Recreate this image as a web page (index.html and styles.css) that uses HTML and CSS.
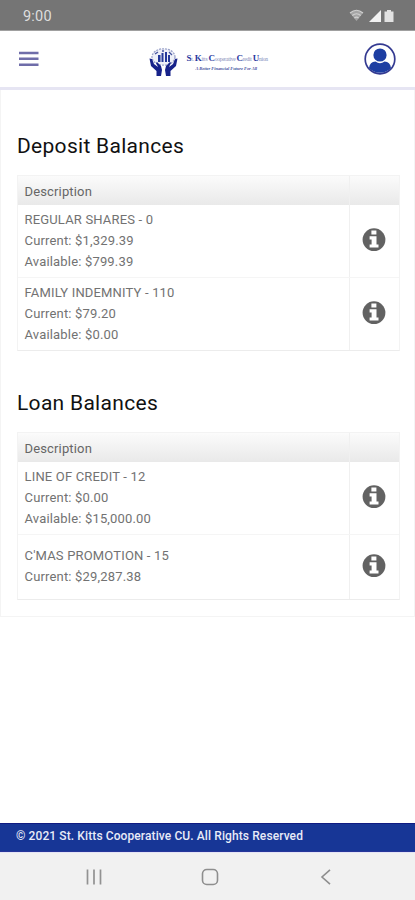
FILE: index.html
```html
<!DOCTYPE html>
<html lang="en">
<head>
<meta charset="utf-8">
<meta name="viewport" content="width=device-width, initial-scale=1">
<title>Account Balances</title>
<link rel="stylesheet" href="styles.css">
</head>
<body>
<svg class="defs" width="0" height="0" aria-hidden="true">
  <symbol id="info" viewBox="0 0 24 24">
    <circle cx="12" cy="11.7" r="11.4" fill="#626262"/>
    <path fill="#fff" d="M9.4 2.6h5v3.8h-5zM7.6 8.300h6.9v8.2h2v3.1H7.6v-3.1h2v-5.1h-2z"/>
  </symbol>
</svg>
<div class="status">
  <span class="time">9:00</span>
  <svg class="status-icons" width="46" height="16" viewBox="0 0 46 16">
    <path d="M1 5Q7.500-.5 14 5L7.500 13z" fill="#a5a5a5"/>
    <path d="M1 5Q7.500-.5 14 5M3.300 7.500Q7.500 4 11.700 7.500M5.400 10Q7.500 8.200 9.600 10" fill="none" stroke="#d0d0d0" stroke-width="1.200"/>
    <path d="M20 14 32 2v12z" fill="#f1f1f1"/>
    <path d="M38 2h4v1.500h2.500V14h-9V3.500H38z" fill="#e2e2e2"/>
  </svg>
</div>
<header class="topbar">
  <svg class="menu" width="20" height="16" viewBox="0 0 20 16"><path d="M0 2h19.500M0 7.700h19.500M0 13.700h19.500" stroke="#6f6da9" stroke-width="2.400"/></svg>
  <div class="brand">
    <svg class="mark" width="29" height="30" viewBox="0 0 29 30">
      <ellipse cx="14.500" cy="9" rx="11.500" ry="8.200" fill="#eef0f8" stroke="#9aa2c9" stroke-width="1.300" stroke-dasharray="2 1"/>
      <path d="M9 7h2.500v7H9zM12.500 5h2v9h-2zM16 4h2v10h-2zM19 7h2v7h-2z" fill="#24389a"/>
      <path d="M6 6 9 4M13 3h2M20 4l3 3" stroke="#45549f" stroke-width="1.300"/>
      <path d="M.500 10.500 3 11l2 5 4 3-2-4 1-1 4 4 1 4-1 6H7.500v-5L2 18z" fill="#17228a"/>
      <path d="M28.500 10.500 26 11l-2 5-4 3 2-4-1-1-4 4-1 4 1 6h4.500v-5L27 18z" fill="#17228a"/>
    </svg>
    <div class="wordmark">
      <div class="name"><b>S</b>t. <b>K</b>itts <b>C</b>ooperative <b>C</b>redit <b>U</b>nion</div>
      <div class="tagline">A Better Financial Future For All</div>
    </div>
  </div>
  <svg class="avatar" width="32" height="32" viewBox="0 0 32 32">
    <circle cx="16" cy="16" r="14.800" fill="#fff" stroke="#343a91" stroke-width="1.700"/>
    <circle cx="16" cy="12" r="6.600" fill="#1d3ea2"/>
    <path d="M5 25Q5.800 18.800 11.500 18.500 16 21.800 20.500 18.500 26.200 18.800 27 25 22.500 29.800 16 29.800T5 25z" fill="#1d3ea2"/>
  </svg>
</header>
<main class="panel">
  <h2>Deposit Balances</h2>
  <div class="table">
    <div class="row head"><div class="desc">Description</div><div class="action"></div></div>
    <div class="row"><div class="desc"><p>REGULAR SHARES - 0</p><p>Current: $1,329.39</p><p>Available: $799.39</p></div><div class="action"><svg><use href="#info"/></svg></div></div>
    <div class="row"><div class="desc"><p>FAMILY INDEMNITY - 110</p><p>Current: $79.20</p><p>Available: $0.00</p></div><div class="action"><svg><use href="#info"/></svg></div></div>
  </div>
  <h2 class="loans">Loan Balances</h2>
  <div class="table">
    <div class="row head"><div class="desc">Description</div><div class="action"></div></div>
    <div class="row"><div class="desc"><p>LINE OF CREDIT - 12</p><p>Current: $0.00</p><p>Available: $15,000.00</p></div><div class="action"><svg><use href="#info"/></svg></div></div>
    <div class="row short"><div class="desc"><p>C'MAS PROMOTION - 15</p><p>Current: $29,287.38</p></div><div class="action"><svg><use href="#info"/></svg></div></div>
  </div>
</main>
<footer class="footer">© 2021 St. Kitts Cooperative CU. All Rights Reserved</footer>
<nav class="nav">
  <svg width="16" height="16" viewBox="0 0 16 16"><path d="M1.500 .500v15M8 .500v15M14.500 .500v15" stroke="#929292" stroke-width="1.700"/></svg>
  <svg width="18" height="18" viewBox="0 0 18 18"><rect x="1.500" y="1.500" width="15" height="15" rx="4.300" fill="none" stroke="#8e8e8e" stroke-width="1.600"/></svg>
  <svg width="16" height="16" viewBox="0 0 16 16"><path d="M12 .800 4 8l8 7.200" fill="none" stroke="#8e8e8e" stroke-width="1.600"/></svg>
</nav>
</body>
</html>
```

FILE: styles.css
```css
* { box-sizing: border-box; }
body {
  margin: 0;
  height: 900px;
  display: flex;
  flex-direction: column;
  background: #fff;
  font-family: Roboto, "Liberation Sans", sans-serif;
  overflow: hidden;
}
svg { display: block; flex: none; }
.status {
  height: 31px;
  flex: none;
  display: flex;
  align-items: center;
  justify-content: space-between;
  padding: 2px 20px 0 23px;
  background: #757575;
  border-bottom: 1px solid #a0a0a0;
}
.time { color: #dedede; font-size: 14.500px; letter-spacing: .2px; }
.topbar {
  height: 59px;
  flex: none;
  display: flex;
  align-items: center;
  justify-content: space-between;
  padding: 0 19px;
  border-bottom: 3px solid #e6e5f3;
}
.brand { display: flex; align-items: center; gap: 9px; margin: 7px 0 0 14px; }
.wordmark { width: 82px; font-family: "Liberation Serif", serif; color: #8189ba; white-space: nowrap; }
.name { font-size: 5.500px; line-height: 11px; letter-spacing: -.25px; }
.name b { font-size: 9px; color: #2937a0; }
.tagline { margin-left: 9px; font-size: 4.500px; line-height: 7px; font-weight: bold; font-style: italic; color: #4651a0; letter-spacing: -.05px; }
.panel {
  height: 527px;
  flex: none;
  padding: 41px 14px 0 16px;
  border: 1px solid #f4f4f4;
  border-top: 0;
}
h2 { margin: 0; height: 44px; line-height: 31px; font-size: 21px; font-weight: 400; color: #111; letter-spacing: .3px; }
h2.loans { margin-top: 37px; }
.table { border: 1px solid #f3f3f3; border-bottom-color: #ececec; }
.row { display: flex; height: 72px; }
.row + .row + .row { height: 73px; border-top: 1px solid #f5f5f5; }
.row.head { height: 29px; background: linear-gradient(#fbfbfb, #e9e9e9); }
.row + .row + .row.short { height: 65px; }
.desc {
  flex: 1;
  display: flex;
  flex-direction: column;
  justify-content: center;
  padding: 0 0 2px 6.500px;
  font-size: 13px;
  line-height: 21px;
  letter-spacing: .17px;
  color: #727272;
}
.head .desc { padding: 2px 0 0 6.500px; color: #666; letter-spacing: .15px; }
.desc p { margin: 0; }
.action {
  width: 50px;
  display: flex;
  align-items: center;
  justify-content: center;
  padding: 0 2px 2px 0;
  border-left: 1px solid #f0f0f0;
}
.action svg { width: 24px; height: 24px; }
.footer {
  height: 29px;
  flex: none;
  margin-top: auto;
  padding-left: 16px;
  line-height: 24px;
  background: #173696;
  border-top: 1px solid #101b82;
  border-bottom: 1px solid #27369a;
  color: #e8ebf8;
  font-size: 12px;
  font-weight: 500;
  letter-spacing: .1px;
}
.nav {
  height: 48px;
  flex: none;
  display: flex;
  align-items: center;
  justify-content: space-between;
  padding: 0 81px 0 86px;
  background: #f1f1f1;
  border-top: 1px solid #e4e4f5;
}
```
